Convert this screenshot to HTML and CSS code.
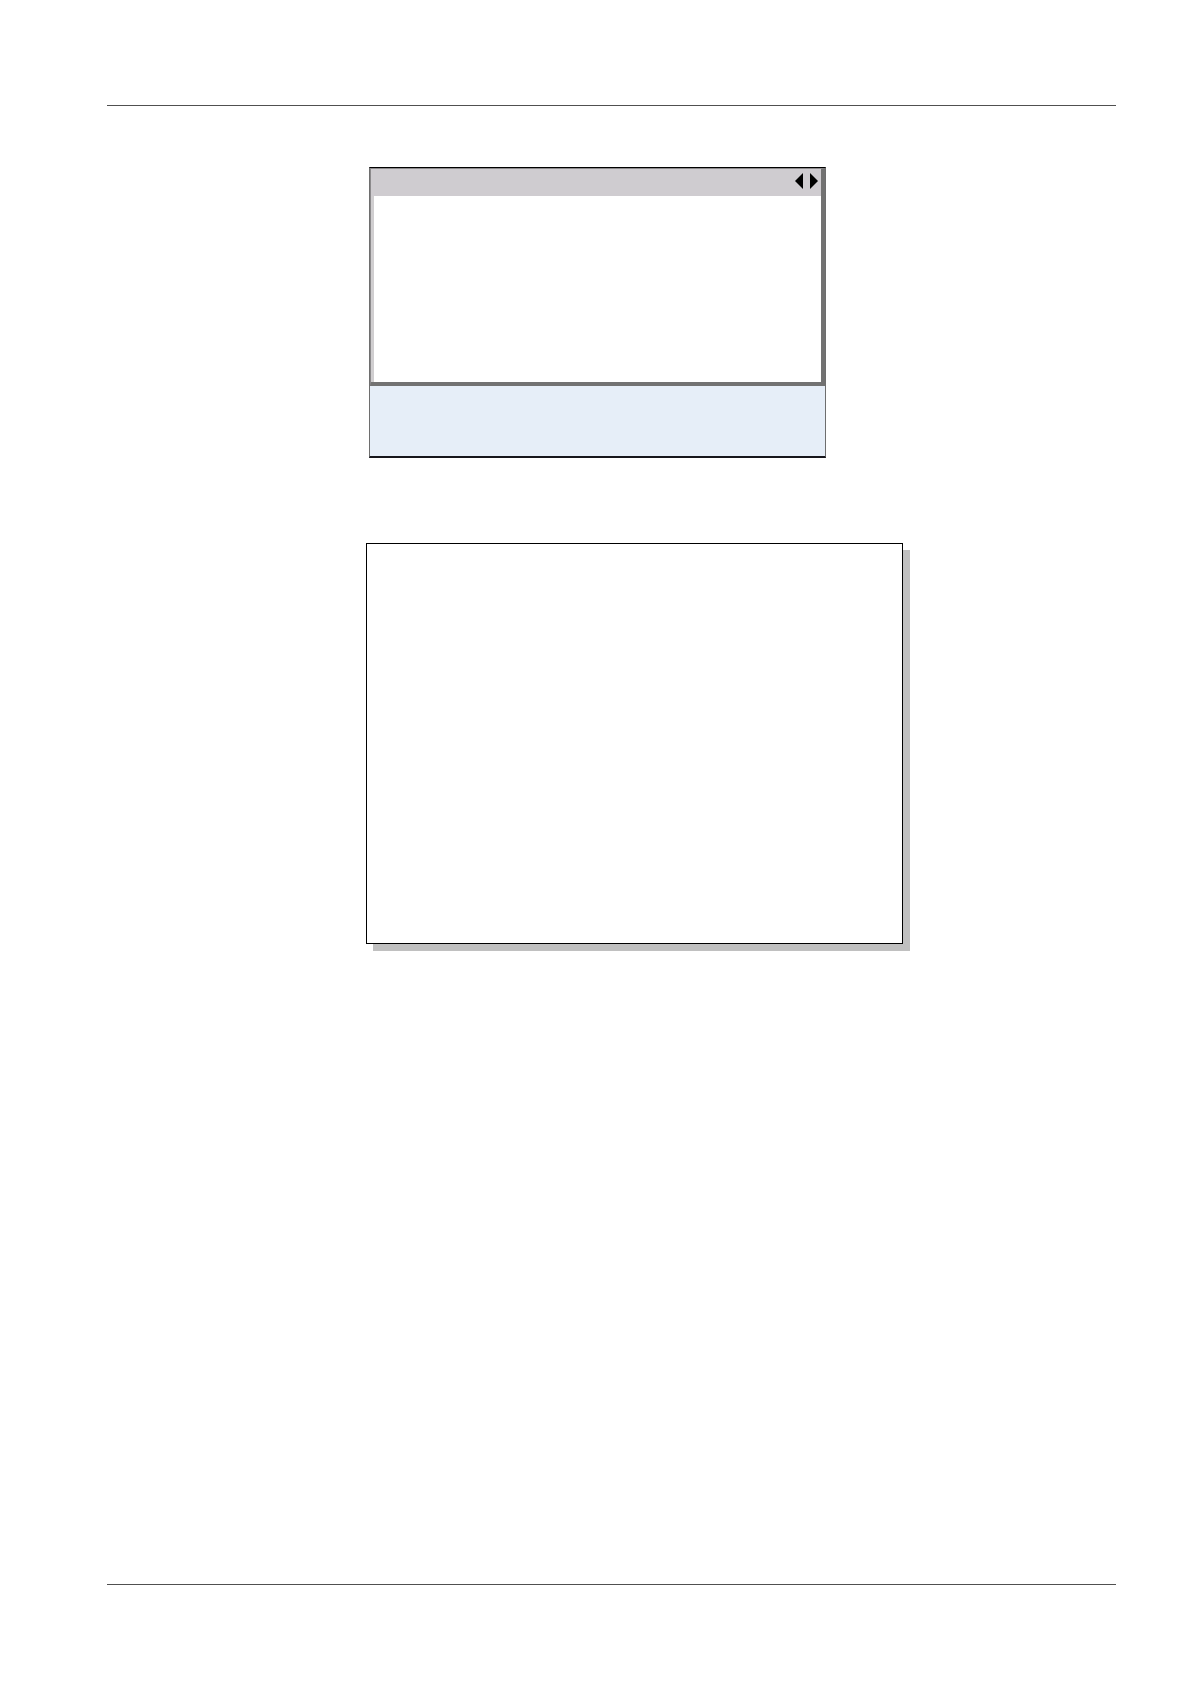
FILE: index.html
```html
<!DOCTYPE html>
<html lang="en">
<head>
    <meta charset="UTF-8">
    <meta name="viewport" content="width=device-width, initial-scale=1.0">
    <title>Page</title>
    <link rel="stylesheet" href="styles.css">
</head>
<body>

<div class="page">
    <header class="page-header"></header>
    <main class="content">
        <section class="panel">
            <div class="panel-window">
                <div class="title-bar">
                    <button class="arrow" type="button" aria-label="Previous">
                        <svg width="8" height="16" viewBox="0 0 8 16"><path d="M8 0V16L0 8Z"/></svg>
                    </button>
                    <button class="arrow" type="button" aria-label="Next">
                        <svg width="8" height="16" viewBox="0 0 8 16"><path d="M0 0V16L8 8Z"/></svg>
                    </button>
                </div>
                <div class="panel-body"></div>
            </div>
            <div class="panel-footer"></div>
        </section>
        <section class="card"></section>
    </main>
    <footer class="page-footer"></footer>
</div>

</body>
</html>
```

FILE: styles.css
```css
* {
    box-sizing: border-box;
}
body {
    margin: 0;
    background-color: white;
    font-family: "Liberation Sans", Arial, sans-serif;
}
.page {
    display: flex;
    flex-direction: column;
    min-height: 100vh;
    padding: 0 74px 0 107px;
}
.page-header {
    height: 106px;
    border-bottom: 1px solid #505050;
}
.page-footer {
    height: 100px;
    border-top: 1px solid #505050;
}
.content {
    flex: 1;
    display: flex;
    flex-direction: column;
    gap: 85px;
    padding: 61px 0 61px 259px;
}
.panel {
    max-width: 457px;
    margin-left: 3px;
    border: 1px solid #6e6e6e;
    border-top-color: black;
    border-bottom: 2px solid #16161c;
}
.panel-window {
    border-top: 1px solid #8c8a8c;
    border-left: 1px solid #8c8a8c;
    border-right: 4px solid #727272;
    border-bottom: 4px solid #727272;
}
.title-bar {
    display: flex;
    align-items: flex-start;
    justify-content: flex-end;
    gap: 7px;
    height: 27px;
    padding: 4px 3px 0 0;
    background-color: #cfccd0;
}
.arrow {
    display: flex;
    padding: 0;
    border: none;
    background: none;
    cursor: pointer;
}
.panel-body {
    height: 186px;
    border-left: 3px solid #d0ced0;
    background-color: white;
}
.panel-footer {
    height: 70px;
    background-color: #e6eef8;
}
.card {
    max-width: 537px;
    height: 401px;
    border: 1px solid black;
    background-color: white;
    box-shadow: 7px 7px 0 #c0c0c0;
}
```
